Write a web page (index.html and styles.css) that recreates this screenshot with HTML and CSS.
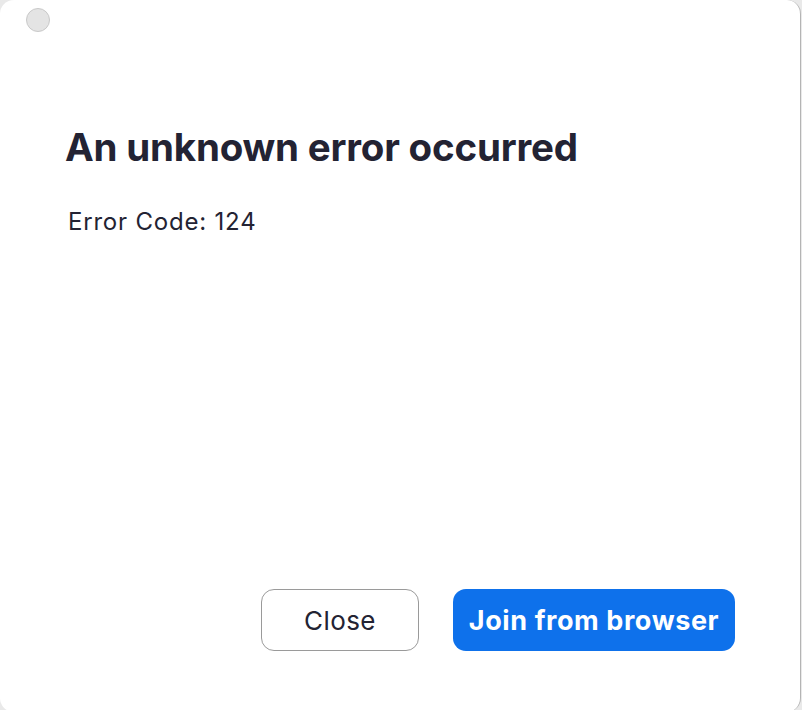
FILE: index.html
```html
<!DOCTYPE html>
<html lang="en">
<head>
    <meta charset="UTF-8">
    <title>Error</title>
    <link rel="stylesheet" href="styles.css">
</head>
<body>
    <div class="window">
        <div class="titlebar">
            <span class="light"></span>
        </div>
        <div class="content">
            <h1>An unknown error occurred</h1>
            <p class="code">Error Code: 124</p>
        </div>
        <div class="actions">
            <button class="btn close">Close</button>
            <button class="btn primary">Join from browser</button>
        </div>
    </div>
</body>
</html>
```

FILE: styles.css
```css
body {
    margin: 0;
    background: #e9e9e9;
    font-family: Inter, 'Liberation Sans', Arial, sans-serif;
    color: #232333;
}
.window {
    width: 801px;
    height: 712px;
    background: #fff;
    border-radius: 14px;
    border-right: 1px solid #b4b4b4;
    box-sizing: border-box;
    display: flex;
    flex-direction: column;
}
.titlebar {
    height: 40px;
    padding-left: 26px;
    display: flex;
    align-items: center;
}
.light {
    width: 22px;
    height: 22px;
    border-radius: 50%;
    background: #e4e4e4;
    border: 1px solid #c9c9c9;
}
.content {
    padding: 0 0 0 65px;
    flex: 1;
}
h1 {
    margin: 85px 0 0;
    font-size: 38.5px;
    line-height: 1.15;
    font-weight: 700;
    letter-spacing: -0.2px;
    color: #232333;
}
.code {
    margin: 38px 0 0 3px;
    font-size: 24px;
    letter-spacing: 0.8px;
    color: #232333;
}
.actions {
    display: flex;
    justify-content: flex-end;
    gap: 34px;
    padding: 0 65px 61px 0;
}
.btn {
    height: 62px;
    font-family: Inter, 'Liberation Sans', Arial, sans-serif;
    font-size: 26px;
    border-radius: 13px;
    cursor: pointer;
}
.close {
    width: 158px;
    background: #fff;
    border: 1.5px solid #9a9a9a;
    color: #232333;
    letter-spacing: 0.4px;
}
.primary {
    width: 282px;
    padding: 0;
    background: #0e71eb;
    border: none;
    color: #fff;
    font-weight: 700;
    font-size: 27px;
    letter-spacing: 0.6px;
}
```
